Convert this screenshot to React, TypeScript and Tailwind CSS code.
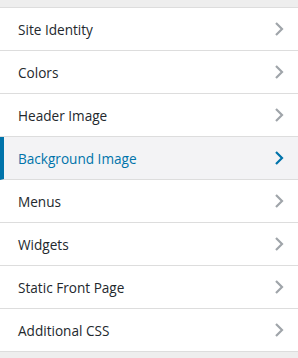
const items = [
  "Site Identity",
  "Colors",
  "Header Image",
  "Background Image",
  "Menus",
  "Widgets",
  "Static Front Page",
  "Additional CSS",
];

const Chevron = ({ active }: { active: boolean }) => (
  <svg
    width="10"
    height="16"
    viewBox="0 0 10 16"
    fill="none"
    stroke={active ? "#0073aa" : "#a0a5aa"}
    strokeWidth="2.2"
  >
    <path d="M2 2l6 6-6 6" />
  </svg>
);

export default function App() {
  return (
    <div className="min-h-screen w-[298px] bg-[#eeeeee] pt-[7px] font-['Open_Sans',sans-serif]">
      <ul className="border-t border-[#dddddd]">
        {items.map((label) => {
          const active = label === "Background Image";
          return (
            <li
              key={label}
              className={
                active
                  ? "flex h-[43px] items-center justify-between border-b border-l-4 border-b-[#dddddd] border-l-[#0073aa] bg-[#f3f3f5] pl-[14px] pr-[14px] text-[#0073aa]"
                  : "flex h-[43px] items-center justify-between border-b border-[#dddddd] bg-white pl-[18px] pr-[14px] text-[#23282d]"
              }
            >
              <span className="pt-[2px] text-[13.6px] leading-none">{label}</span>
              <Chevron active={active} />
            </li>
          );
        })}
      </ul>
    </div>
  );
}
